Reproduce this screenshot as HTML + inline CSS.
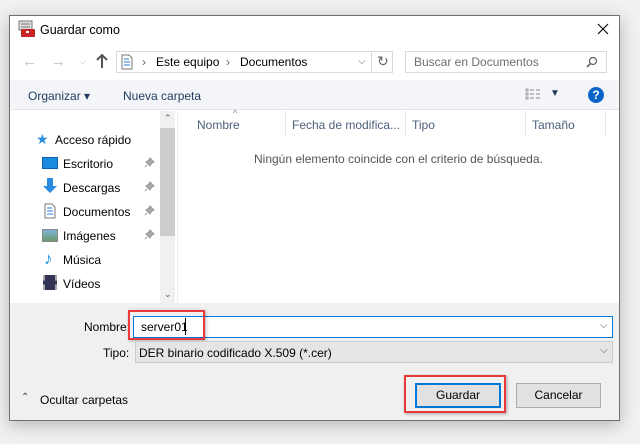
<!DOCTYPE html>
<html><head><meta charset="utf-8"><style>
*{margin:0;padding:0;box-sizing:border-box}
body{width:640px;height:444px;background:#f2f1f1;font-family:"Liberation Sans",sans-serif;font-size:12px;color:#000;position:relative;overflow:hidden}
.a{position:absolute;white-space:nowrap}
#win{position:absolute;left:9px;top:15px;width:611px;height:406px;background:#fff;border:1px solid #707070;box-shadow:0 4px 16px rgba(0,0,0,.25)}
</style></head><body>
<div id="win"></div>
<svg class="a" style="left:18px;top:20px" width="18" height="18"><rect x="1" y="1" width="13" height="9" fill="#ddd" stroke="#777"/><line x1="3" y1="4" x2="12" y2="4" stroke="#777"/><line x1="3" y1="7" x2="12" y2="7" stroke="#777"/><rect x="3" y="9" width="14" height="8" rx="1" fill="#c8242a"/><rect x="8" y="11" width="3" height="2" fill="#fff"/></svg>
<div class="a" style="left:40px;top:23px;font-size:12.5px">Guardar como</div>
<svg class="a" style="left:597px;top:23px" width="12" height="12"><path d="M1 1L11 11M11 1L1 11" stroke="#000" stroke-width="1.1"/></svg>
<div class="a" style="left:22px;top:53px;color:#bbb;font-size:15px">←</div>
<div class="a" style="left:51px;top:53px;color:#bbb;font-size:15px">→</div>
<div class="a" style="left:79px;top:56px;color:#bbb;font-size:9px">⌵</div>
<svg class="a" style="left:96px;top:54px" width="12" height="14"><path d="M6 1v13M1 6l5-5 5 5" stroke="#555" stroke-width="2" fill="none"/></svg>
<div class="a" style="left:116px;top:51px;width:256px;height:22px;border:1px solid #d9d9d9"></div>
<div class="a" style="left:371px;top:51px;width:22px;height:22px;border:1px solid #d9d9d9"></div>
<svg class="a" style="left:121px;top:54px" width="12" height="16"><path d="M1 1h7l3 3v11H1z" fill="#fff" stroke="#777"/><path d="M3 5h5M3 8h6M3 11h6" stroke="#2b7bd0"/></svg>
<div class="a" style="left:142px;top:55px;color:#666">›</div>
<div class="a" style="left:156px;top:55px">Este equipo</div>
<div class="a" style="left:226px;top:55px;color:#666">›</div>
<div class="a" style="left:240px;top:55px">Documentos</div>
<div class="a" style="left:358px;top:56px;color:#666;font-size:10px">⌵</div>
<div class="a" style="left:377px;top:53px;color:#666;font-size:14px">↻</div>
<div class="a" style="left:405px;top:51px;width:202px;height:22px;border:1px solid #d9d9d9"></div>
<div class="a" style="left:414px;top:55px;color:#6d6d6d">Buscar en Documentos</div>
<svg class="a" style="left:586px;top:56px" width="12" height="12"><circle cx="7" cy="5" r="3.5" stroke="#666" fill="none" stroke-width="1.3"/><path d="M4.5 7.5L1 11" stroke="#666" stroke-width="1.6"/></svg>
<div class="a" style="left:10px;top:80px;width:609px;height:30px;background:#f4f5f8;border-bottom:1px solid #e6e6e6"></div>
<div class="a" style="left:28px;top:89px;color:#1e3a5f">Organizar ▾</div>
<div class="a" style="left:123px;top:89px;color:#1e3a5f">Nueva carpeta</div>
<svg class="a" style="left:525px;top:88px" width="16" height="12"><path d="M1 1h2v2H1zM1 5h2v2H1zM1 9h2v2H1z" fill="none" stroke="#888" stroke-width=".8"/><path d="M5 2h4M5 6h4M5 10h4M11 2h4M11 6h4M11 10h4" stroke="#888"/></svg>
<div class="a" style="left:550px;top:88px;color:#1e3a5f;font-size:10px">▼</div>
<div class="a" style="left:588px;top:87px;width:16px;height:16px;border-radius:50%;background:#0a64c8;color:#fff;font-weight:bold;font-size:12px;text-align:center;line-height:16px">?</div>
<div class="a" style="left:160px;top:111px;width:15px;height:192px;background:#f0f0f0"></div>
<div class="a" style="left:160px;top:128px;width:15px;height:108px;background:#cdcdcd"></div>
<div class="a" style="left:164px;top:113px;font-size:9px;color:#555">⌃</div>
<div class="a" style="left:164px;top:289px;font-size:9px;color:#555">⌄</div>
<div class="a" style="left:177px;top:111px;width:1px;height:192px;background:#eee"></div>
<div class="a" style="left:36px;top:131px;color:#2b8de0;font-size:14px">★</div>
<div class="a" style="left:55px;top:133px">Acceso rápido</div>
<div class="a" style="left:42px;top:157px;width:16px;height:12px;background:#1a8ce0;border:1px solid #0a5fa8"></div>
<div class="a" style="left:63px;top:157px">Escritorio</div>
<svg class="a" style="left:42px;top:177px" width="16" height="17"><path d="M5 1h6v8h4l-7 7-7-7h4z" fill="#2a8ae0"/></svg>
<div class="a" style="left:63px;top:181px">Descargas</div>
<svg class="a" style="left:44px;top:203px" width="12" height="16"><path d="M1 1h7l3 3v11H1z" fill="#fff" stroke="#777"/><path d="M3 5h5M3 8h6M3 11h6" stroke="#2b7bd0"/></svg>
<div class="a" style="left:63px;top:205px">Documentos</div>
<div class="a" style="left:42px;top:229px;width:16px;height:13px;background:linear-gradient(#7fb3d8,#6a9a6a);border:1px solid #888"></div>
<div class="a" style="left:63px;top:229px">Imágenes</div>
<div class="a" style="left:44px;top:249px;color:#1a8ce0;font-size:17px">♪</div>
<div class="a" style="left:63px;top:253px">Música</div>
<div class="a" style="left:43px;top:275px;width:14px;height:15px;background:#335;border-left:2px dashed #aaa;border-right:2px dashed #aaa"></div>
<div class="a" style="left:63px;top:277px">Vídeos</div>
<svg class="a" style="left:144px;top:157px" width="11" height="11"><path d="M6 1l4 4-2 1-2 3-4-4 3-2zM3 8L1 10" stroke="#999" fill="#aaa"/></svg>
<svg class="a" style="left:144px;top:181px" width="11" height="11"><path d="M6 1l4 4-2 1-2 3-4-4 3-2zM3 8L1 10" stroke="#999" fill="#aaa"/></svg>
<svg class="a" style="left:144px;top:205px" width="11" height="11"><path d="M6 1l4 4-2 1-2 3-4-4 3-2zM3 8L1 10" stroke="#999" fill="#aaa"/></svg>
<svg class="a" style="left:144px;top:229px" width="11" height="11"><path d="M6 1l4 4-2 1-2 3-4-4 3-2zM3 8L1 10" stroke="#999" fill="#aaa"/></svg>
<div class="a" style="left:233px;top:108px;font-size:9px;color:#888">^</div>
<div class="a" style="left:197px;top:118px;color:#4c607a">Nombre</div>
<div class="a" style="left:285px;top:111px;width:1px;height:25px;background:#e5e5e5"></div>
<div class="a" style="left:292px;top:118px;color:#4c607a">Fecha de modifica...</div>
<div class="a" style="left:405px;top:111px;width:1px;height:25px;background:#e5e5e5"></div>
<div class="a" style="left:412px;top:118px;color:#4c607a">Tipo</div>
<div class="a" style="left:525px;top:111px;width:1px;height:25px;background:#e5e5e5"></div>
<div class="a" style="left:532px;top:118px;color:#4c607a">Tamaño</div>
<div class="a" style="left:605px;top:111px;width:1px;height:25px;background:#e5e5e5"></div>
<div class="a" style="left:254px;top:152px;color:#555">Ningún elemento coincide con el criterio de búsqueda.</div>
<div class="a" style="left:10px;top:303px;width:609px;height:117px;background:#f0f0f0"></div>
<div class="a" style="left:84px;top:320px">Nombre:</div>
<div class="a" style="left:133px;top:316px;width:480px;height:22px;background:#fff;border:1px solid #0078d7"></div>
<div class="a" style="left:141px;top:320px">server01</div>
<div class="a" style="left:185px;top:318px;width:1px;height:17px;background:#000"></div>
<div class="a" style="left:600px;top:320px;color:#555;font-size:10px">⌵</div>
<div class="a" style="left:128px;top:310px;width:77px;height:30px;border:2px solid #e8393b;box-shadow:1px 1px 3px rgba(0,0,0,.3)"></div>
<div class="a" style="left:103px;top:346px">Tipo:</div>
<div class="a" style="left:135px;top:341px;width:478px;height:22px;background:#e5e5e5;border:1px solid #ccc"></div>
<div class="a" style="left:139px;top:346px">DER binario codificado X.509 (*.cer)</div>
<div class="a" style="left:600px;top:345px;color:#555;font-size:10px">⌵</div>
<div class="a" style="left:21px;top:392px;color:#444;font-size:10px">⌃</div>
<div class="a" style="left:40px;top:393px">Ocultar carpetas</div>
<div class="a" style="left:404px;top:375px;width:102px;height:38px;border:2px solid #e8393b;box-shadow:1px 1px 3px rgba(0,0,0,.3)"></div>
<div class="a" style="left:415px;top:383px;width:86px;height:25px;background:#e1e1e1;border:2px solid #0078d7;text-align:center;line-height:21px">Guardar</div>
<div class="a" style="left:516px;top:383px;width:85px;height:25px;background:#e1e1e1;border:1px solid #adadad;text-align:center;line-height:23px">Cancelar</div>
</body></html>
